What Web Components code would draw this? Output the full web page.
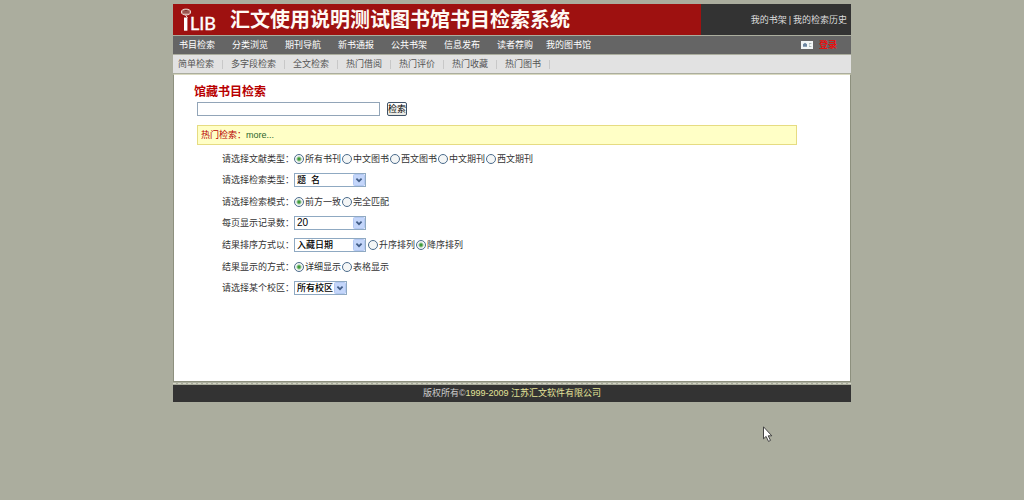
<!DOCTYPE html>
<html lang="zh-CN">
<head>
<meta charset="utf-8">
<title>汇文使用说明测试图书馆书目检索系统</title>
<style>
  body {
    margin: 0;
    background: #abad9e;
    color: #333;
    font: 9px/12px "Liberation Sans", "Noto Sans CJK SC", sans-serif;
  }
</style>
</head>
<body>
<lib-page>
  <lib-header slot="header" heading="汇文使用说明测试图书馆书目检索系统"></lib-header>
  <lib-nav slot="header">
    <a href="#search">书目检索</a><a href="#browse">分类浏览</a><a href="#journals">期刊导航</a><a href="#new">新书通报</a><a href="#shelf">公共书架</a><a href="#info">信息发布</a><a href="#recommend">读者荐购</a><a href="#mine">我的图书馆</a>
  </lib-nav>
  <lib-subnav slot="header">
    <a href="#simple">简单检索</a><a href="#fields">多字段检索</a><a href="#fulltext">全文检索</a><a href="#loans">热门借阅</a><a href="#reviews">热门评价</a><a href="#favourites">热门收藏</a><a href="#books">热门图书</a>
  </lib-subnav>
  <search-box heading="馆藏书目检索"></search-box>
  <hot-search></hot-search>
  <search-options>
    <option-field label="请选择文献类型：" radios="所有书刊|中文图书|西文图书|中文期刊|西文期刊" checked="0"></option-field>
    <option-field label="请选择检索类型：" choices="题&nbsp; 名"></option-field>
    <option-field label="请选择检索模式：" radios="前方一致|完全匹配" checked="0"></option-field>
    <option-field label="每页显示记录数：" choices="20" plain></option-field>
    <option-field label="结果排序方式以：" choices="入藏日期" radios="升序排列|降序排列" checked="1"></option-field>
    <option-field label="结果显示的方式：" radios="详细显示|表格显示" checked="0"></option-field>
    <option-field label="请选择某个校区：" choices="所有校区" compact></option-field>
  </search-options>
  <lib-footer slot="footer">版权所有©<a href="#vendor">1999-2009 江苏汇文软件有限公司</a></lib-footer>
</lib-page>
<mouse-pointer></mouse-pointer>

<script>
class BaseElement extends HTMLElement {
  connectedCallback() {
    if (this.shadowRoot) return;
    this.attachShadow({ mode: 'open' }).innerHTML =
      '<style>*{box-sizing:border-box}</style>' + this.render();
  }
}

customElements.define('lib-page', class extends BaseElement {
  render() {
    return `<style>
      :host { display: block; max-width: 678px; margin: 0 auto; padding-top: 4px; }
      header { display: flex; flex-direction: column; gap: 1px; }
      main { margin-top: 1px; min-height: 308px; padding: 10px 20px 16px; background: #fff; border: 1px solid #8d907e; border-top-color: #d9d9c0; }
      .stripe { height: 2px; border-top: 1px dashed #d4d6c6; margin-top: 1px; }
    </style>
    <header><slot name="header"></slot></header>
    <main><slot></slot></main>
    <div class="stripe"></div>
    <slot name="footer"></slot>`;
  }
});

customElements.define('lib-header', class extends BaseElement {
  render() {
    return `<style>
      :host { display: flex; height: 31px; color: #fff; }
      .brand { flex: 1; display: flex; align-items: center; gap: 12px; padding-left: 8px; background: #9e1110; }
      h1 { margin: 0; font-size: 20px; line-height: 28px; font-weight: 700; color: #fffaf4; white-space: nowrap; }
      .logo { display: block; flex: none; }
      .user { flex: 0 0 150px; display: flex; align-items: center; justify-content: flex-end; gap: 2px; padding-right: 4px; background: #333; color: #ddd; white-space: nowrap; }
      a { color: inherit; text-decoration: none; }
    </style>
    <div class="brand">
      <svg class="logo" width="37" height="31" viewBox="0 0 37 31" role="img" aria-label="iLIB">
        <ellipse cx="5" cy="8" rx="4.6" ry="2.9" fill="#b77770" stroke="#e8d5ce" stroke-width="1"/>
        <path d="M2 8h6M3.5 6.5h3" stroke="#6d2520" stroke-width=".8"/>
        <path d="M4.5 11l2 3" stroke="#e8d5ce" stroke-width="1"/>
        <rect x="3" y="13.5" width="3.4" height="13.2" fill="#fff"/>
        <text x="9" y="26" font-family="Lato, sans-serif" font-size="18" fill="#fff" stroke="#fff" stroke-width=".4">LIB</text>
      </svg>
      <h1>${this.getAttribute('heading')}</h1>
    </div>
    <div class="user"><a href="#shelf">我的书架</a><span>|</span><a href="#history">我的检索历史</a></div>`;
  }
});

customElements.define('lib-nav', class extends BaseElement {
  render() {
    return `<style>
      :host { display: flex; align-items: center; justify-content: space-between; height: 18px; padding: 0 14px 0 6px; background: #656565; color: #fff; }
      nav { display: flex; gap: 17px; white-space: nowrap; }
      ::slotted(a) { color: inherit; text-decoration: none; }
      ::slotted(a:last-of-type) { margin-left: -4px; }
      .login { display: flex; align-items: center; gap: 6px; color: #e81010; font-weight: 700; text-decoration: none; }
      svg { display: block; }
    </style>
    <nav><slot></slot></nav>
    <a class="login" href="#login"><svg width="12" height="8" viewBox="0 0 12 8" aria-hidden="true">
      <rect width="12" height="8" fill="#f2f6f6"/>
      <path d="M2 5.7V3.2l2-1.4 2 1.4v2.5z" fill="#6c86a0"/>
      <path d="M8 2.5h2.4M8 4h1M8 5.5h2.4" stroke="#9aa" stroke-width=".8"/>
    </svg>登录</a>`;
  }
});

customElements.define('lib-subnav', class extends BaseElement {
  render() {
    return `<style>
      :host { display: flex; align-items: center; height: 18px; padding-left: 5px; background: #e2e2e2; color: #555; white-space: nowrap; }
      ::slotted(a) { color: inherit; text-decoration: none; line-height: 9px; border-right: 1px solid #c8c8c8; padding-right: 8px; margin-right: 8px; }
    </style><slot></slot>`;
  }
});

customElements.define('search-box', class extends BaseElement {
  render() {
    return `<style>
      :host { display: block; }
      h2 { margin: 0; font-size: 12px; line-height: 14px; font-weight: 700; color: #b80000; }
      form { display: flex; align-items: center; gap: 7px; margin: 3px 0 0 3px; }
      input { width: 183px; height: 14px; padding: 0 2px; border: 1px solid #92a5b8; font: inherit; }
      button { width: 20px; height: 14px; padding: 0; border: 1px solid #3f5368; border-radius: 2px; background: linear-gradient(#fff, #e8e8e2); color: #000; font: inherit; line-height: 12px; white-space: nowrap; }
    </style>
    <h2>${this.getAttribute('heading')}</h2>
    <form><input type="text" aria-label="${this.getAttribute('heading')}"><button type="button">检索</button></form>`;
  }
});

customElements.define('hot-search', class extends BaseElement {
  render() {
    return `<style>
      :host { box-sizing: border-box; display: flex; align-items: center; height: 20px; margin: 9px 33px 0 3px; padding-left: 3px; border: 1px solid #e6dc82; background: #ffffc6; color: #b80000; }
      a { color: #2c662c; text-decoration: none; }
    </style>热门检索：<a href="#more">more...</a>`;
  }
});

customElements.define('search-options', class extends BaseElement {
  render() {
    return `<style>
      :host { display: flex; flex-direction: column; margin: 3px 0 0 28px; }
    </style><slot></slot>`;
  }
});

customElements.define('option-field', class extends BaseElement {
  render() {
    const label = this.getAttribute('label');
    const choices = this.getAttribute('choices');
    const radios = this.getAttribute('radios');
    const checked = Number(this.getAttribute('checked'));
    const select = choices ? `<span class="drop">
      <select id="choice">${choices.split('|').map(c => `<option>${c}</option>`).join('')}</select>
      <svg width="12" height="12" viewBox="0 0 12 12" aria-hidden="true">
        <rect x=".5" y=".5" width="11" height="11" rx="1" fill="#c4d6fa" stroke="#b3c8f2"/>
        <path d="M3.4 4.6L6 7.2l2.6-2.6" fill="none" stroke="#425d87" stroke-width="1.7"/>
      </svg></span>` : '';
    const group = radios ? `<span class="group" role="radiogroup" aria-label="${label}">${radios.split('|').map((r, i) =>
      `<label><input type="radio" name="group"${i === checked ? ' checked' : ''}>${r}</label>`).join('')}</span>` : '';
    const plain = this.hasAttribute('plain');
    return `<style>
      :host { display: flex; align-items: center; height: ${select ? 22 : 21}px; white-space: nowrap; }
      .name { width: 72px; }
      .drop { display: grid; width: ${this.hasAttribute('compact') ? 53 : 72}px; margin-right: 2px; }
      .drop > * { grid-area: 1 / 1; }
      .drop svg { place-self: center end; margin-right: 1px; pointer-events: none; }
      select { appearance: none; width: 100%; height: 14px; margin: 0; padding: 0 13px 0 2px; border: 1px solid #8fa9c2; border-radius: 0; background: #fff; color: #000; font: inherit; font-size: ${plain ? 10 : 9}px; line-height: 12px; font-weight: ${plain ? 400 : 500}; }
      .group { display: flex; gap: 1px; }
      .group label { display: flex; align-items: center; gap: 1px; }
      input { appearance: none; width: 10px; height: 10px; margin: 0; border: 1px solid #4c6c8c; border-radius: 50%; background: #f4f6f6; }
      input:checked { background: radial-gradient(circle, #3f9a3a 0 1px, #f4f6f6 3px); }
    </style>
    ${select ? `<label class="name" for="choice">${label}</label>` : `<span class="name">${label}</span>`}${select}${group}`;
  }
});

customElements.define('lib-footer', class extends BaseElement {
  render() {
    return `<style>
      :host { display: block; padding: 2px 0 3px; background: #333; color: #ccc; text-align: center; }
      ::slotted(a) { color: #e3e39a; text-decoration: none; }
    </style><slot></slot>`;
  }
});

customElements.define('mouse-pointer', class extends BaseElement {
  render() {
    return `<style>
      :host { position: absolute; left: 763px; top: 426px; pointer-events: none; }
      svg { display: block; }
    </style>
    <svg width="10" height="17" viewBox="0 0 10 17" aria-hidden="true">
      <path d="M.5 .8v12l2.6-2.4 2.4 5 2-1-2.3-4.6h3.6z" fill="#fff" stroke="#333" stroke-width=".9"/>
    </svg>`;
  }
});
</script>
</body>
</html>
